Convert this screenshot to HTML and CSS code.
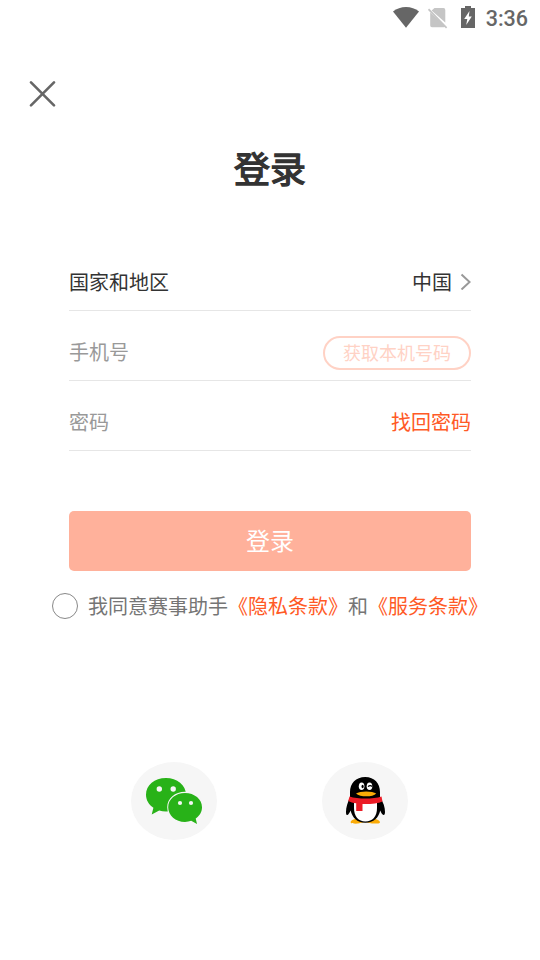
FILE: index.html
```html
<!DOCTYPE html>
<html lang="zh-CN">
<head>
<meta charset="utf-8">
<meta name="viewport" content="width=device-width, initial-scale=1">
<title>登录</title>
<link rel="stylesheet" href="styles.css">
</head>
<body>
<div class="screen">
  <header class="status">
    <svg class="wifi" width="26" height="21" viewBox="0 0 26 21"><path d="M0 4.5C7-1.5 19-1.5 26 4.5L13 20.7z" fill="#666"/></svg>
    <svg class="sim" width="20" height="21" viewBox="0 0 20 21"><path d="M6.5 0H15.5Q17.3 0 17.3 2V14.6L3.6 2.6zM2.2 4.5L17.3 18V18.5Q17 19.3 15.5 19.3H4Q2.2 19.3 2.2 17.5z" fill="#c5c5c5"/><path d="M.5 1.2L18.6 19.8" stroke="#c5c5c5" stroke-width="1.7"/></svg>
    <svg class="battery" width="14" height="22" viewBox="0 0 14 22"><path d="M4 0H10V2H14V22H0V2H4z" fill="#666"/><path d="M8.5 5L3.2 13H6.3L5.2 19L10.8 10.6H7.8z" fill="#fff"/></svg>
    <span class="time">3:36</span>
  </header>
  <button class="close" aria-label="关闭">
    <svg width="27" height="27" viewBox="0 0 27 27"><path d="M2 2.3L25 25.3M25 2.3L2 25.3" fill="none" stroke="#666" stroke-width="2.6" stroke-linecap="round"/></svg>
  </button>
  <h1>登录</h1>
  <main class="form">
    <div class="row">
      <span>国家和地区</span>
      <span class="country">中国
        <svg width="11" height="17" viewBox="0 0 11 17"><path d="M1.5 1.5L9.6 9L1.5 16.5" fill="none" stroke="#999" stroke-width="2"/></svg>
      </span>
    </div>
    <div class="row">
      <span class="placeholder">手机号</span>
      <button class="get-number">获取本机号码</button>
    </div>
    <div class="row">
      <span class="placeholder">密码</span>
      <a class="recover">找回密码</a>
    </div>
    <button class="submit">登录</button>
  </main>
  <div class="agreement">
    <span class="radio"></span>
    <span>我同意赛事助手<a>《隐私条款》</a>和<a>《服务条款》</a></span>
  </div>
  <footer class="social">
    <button class="provider" aria-label="微信">
      <svg width="86" height="78" viewBox="0 0 86 78">
        <path d="M35 16C23.5 16 15 23.3 15 32.7C15 38 17.8 42.6 22.4 45.8L20.7 52.4L28.2 48.6C30.4 49.2 32.5 49.6 35 49.6C46 49.6 55 42.4 55 32.7C55 23.3 46 16 35 16z" fill="#28b218"/>
        <path d="M54 29.8C44 29.8 36.2 36.4 36.2 45.2C36.2 54 44 60.8 54 60.8L67 62.5L72.2 55V45.2C72.2 36.4 64 29.8 54 29.8z" fill="#f6f6f6"/>
        <path d="M54 31C44.5 31 37.2 37.2 37.2 45.2C37.2 53.4 44.5 59.9 54 59.9C56.3 59.9 58.4 59.5 60.2 58.8L66 62L64.7 56.4C68.5 54 71 49.9 71 45.2C71 37.2 63.5 31 54 31z" fill="#28b218"/>
        <g fill="#f6f6f6"><circle cx="28.3" cy="27" r="2.7"/><circle cx="42.2" cy="27" r="2.7"/><circle cx="49" cy="41" r="2.1"/><circle cx="60" cy="41" r="2.1"/></g>
      </svg>
    </button>
    <button class="provider" aria-label="QQ">
      <svg width="86" height="78" viewBox="0 0 86 78">
        <path d="M36 56C31 57 28.6 59 28.6 60.2C28.6 61.6 32 61.7 36 61.6L43 60L50 61.6C55 61.7 58 61.5 58 60.2C58 58.8 55 57 51 56z" fill="#faab07"/>
        <path d="M43.2 15C33.8 15 28 21.5 28 30V36C25.5 40 24 45.8 24 50C24 52.6 24.7 53.4 25.4 53C26.5 52.6 27.8 50.5 28.6 48.5C30.2 55.5 35 60.8 43.3 60.8C51.8 60.8 56.8 55.4 58.2 48.5C59 50.5 60.4 52.7 61.5 53C62.3 53.3 63 52.4 63 50C63 45.5 61.5 40 58 36V30C58 21.5 52.5 15 43.2 15z" fill="#000"/>
        <path d="M32 37H55V46C55 54.5 50.5 59.5 43.3 59.5C36.5 59.5 32 54.5 32 46z" fill="#fff"/>
        <path d="M27.5 34.5C36 37.3 51 37.3 59.5 34.5L60.5 39.5C56.5 41.5 48 42.2 40.5 42V49H34.2V41.3C31 40.8 28.6 40.3 26.2 39z" fill="#eb1c26"/>
        <path d="M34 31.5C38 28.8 50.5 28.8 54.2 31.5C51 35.3 38 35.3 34 31.5z" fill="#faab07"/>
        <ellipse cx="39.6" cy="24.3" rx="2.8" ry="3.8" fill="#fff"/><ellipse cx="47.5" cy="24.3" rx="2.8" ry="3.8" fill="#fff"/>
        <ellipse cx="40.6" cy="24.5" rx="1.1" ry="1.8" fill="#000"/>
        <path d="M46 24.6Q48 22.9 50.3 24.4" fill="none" stroke="#000" stroke-width="1.2"/>
      </svg>
    </button>
  </footer>
</div>
</body>
</html>
```
FILE: styles.css
```css
* {
  box-sizing: border-box;
}

body {
  margin: 0;
  background: #fff;
  color: #333;
  font-family: "Noto Sans CJK SC", sans-serif;
  font-size: 20px;
}

button {
  padding: 0;
  border: 0;
  background: none;
  font-family: inherit;
}

svg {
  display: block;
}

.screen {
  display: flex;
  flex-direction: column;
  height: 960px;
  overflow: hidden;
}

.status {
  display: flex;
  justify-content: flex-end;
  height: 36px;
  padding: 6px 12px 0 0;
}

.wifi {
  margin: 1px 9px 0 0;
}

.sim {
  margin: 2px 13px 0 0;
}

.battery {
  margin-right: 11px;
}

.time {
  color: #666;
  font: 500 21.5px/26px Roboto, sans-serif;
}

.close {
  width: 27px;
  height: 27px;
  margin: 44px 0 0 29px;
}

h1 {
  margin: 32px 0 0;
  font-size: 36px;
  font-weight: 400;
  -webkit-text-stroke: 1.3px #333;
  line-height: 56px;
  text-align: center;
}

.form {
  margin: 46px 69px 0;
}

.row {
  display: flex;
  align-items: center;
  justify-content: space-between;
  height: 70px;
  padding-top: 12px;
  border-bottom: 1px solid #e6e6e6;
  line-height: 30px;
}

.country {
  display: flex;
  align-items: center;
  gap: 8px;
}

.placeholder {
  color: #999;
}

.get-number {
  width: 148px;
  height: 34px;
  margin-top: 2px;
  padding-bottom: 2px;
  border: 2px solid #ffd2c5;
  border-radius: 17px;
  color: #ffd2c5;
  font-size: 18px;
  line-height: 28px;
}

.recover,
.agreement a {
  color: #ff5a26;
}

.submit {
  display: block;
  width: 100%;
  height: 60px;
  margin-top: 60px;
  padding-bottom: 3px;
  border-radius: 5px;
  background: #ffb19b;
  color: #fff;
  font-size: 24px;
}

.agreement {
  display: flex;
  align-items: center;
  gap: 10px;
  height: 30px;
  margin: 20px 0 0 52px;
  color: #757575;
  line-height: 30px;
  white-space: nowrap;
}

.radio {
  width: 26px;
  height: 26px;
  border: 1px solid #888;
  border-radius: 50%;
}

.social {
  display: flex;
  gap: 105px;
  margin: 141px 0 0 131px;
}

.provider {
  width: 86px;
  height: 78px;
  border-radius: 50%;
  background: #f6f6f6;
}
```
